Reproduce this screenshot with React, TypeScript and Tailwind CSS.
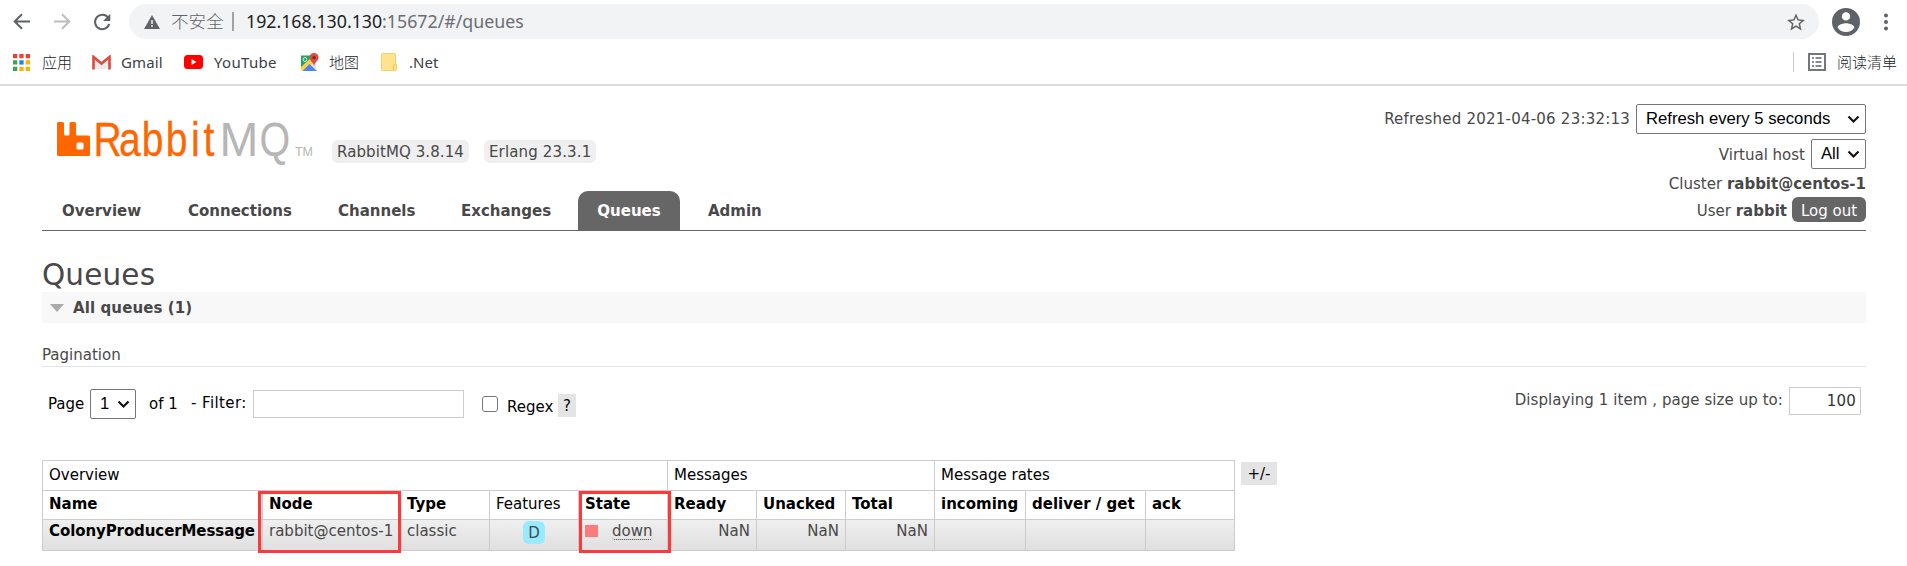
import type { ReactNode } from "react";

function Chevron() {
  return (
    <svg width="13" height="9" viewBox="0 0 13 9" className="shrink-0">
      <path d="M1.5 1.5 6.5 6.5 11.5 1.5" fill="none" stroke="#111" strokeWidth="2.2" />
    </svg>
  );
}

function SelectBox({ className, children }: { className: string; children: ReactNode }) {
  return (
    <button
      className={
        "flex h-[30px] items-center justify-between rounded-[2px] border border-[#767676] bg-white pr-[5px] pl-[9px] font-['Liberation_Sans',Arial,sans-serif] text-[16.67px] leading-5 whitespace-nowrap text-black " +
        className
      }
    >
      {children}
      <Chevron />
    </button>
  );
}

function BrowserBar() {
  return (
    <div className="h-[86px] border-b-2 border-[#dadce0] bg-white font-['Noto_Sans','Noto_Sans_CJK_SC',sans-serif]">
      <div className="flex h-[43px] items-center pl-[13px]">
        <svg width="17" height="17" viewBox="0 0 17 17" fill="none" stroke="#5f6368" strokeWidth="2">
          <path d="M17 8.5H2M9 1.2 1.7 8.5 9 15.8" />
        </svg>
        <svg className="ml-[24px]" width="17" height="17" viewBox="0 0 17 17" fill="none" stroke="#bbbdbf" strokeWidth="2">
          <path d="M0 8.5h15M8 1.2l7.3 7.3L8 15.8" />
        </svg>
        <svg className="ml-[22px]" width="18" height="18" viewBox="0 0 18 18">
          <path d="M15.3 5A7.2 7.2 0 1 0 16.2 11" fill="none" stroke="#5f6368" strokeWidth="2.1" />
          <path d="M17.3 0.8V8h-7.2z" fill="#5f6368" />
        </svg>
        <div className="ml-[18px] flex h-[35px] w-[1690px] items-center rounded-full bg-[#f1f3f4] pr-[14px] pl-[15px]">
          <svg width="16" height="14" viewBox="0 0 16 14">
            <path d="M8 0 16 14H0z" fill="#5f6368" />
            <path d="M7.2 5h1.6v4H7.2zM7.2 10.3h1.6v1.7H7.2z" fill="#f1f3f4" />
          </svg>
          <span className="mb-[2px] ml-[11px] w-[54px] text-[17.6px] leading-6 font-light whitespace-nowrap text-[#5f6368]">不安全</span>
          <span className="ml-[7px] h-[19px] w-[2px] bg-[#a0a3a6]" />
          <span className="mb-[2px] ml-[12px] text-[17.75px] leading-6 whitespace-nowrap text-[#6a6e73]">
            <span className="text-[#202124]">192.168.130.130</span>:15672/#/queues
          </span>
          <svg className="ml-auto" width="18" height="18" viewBox="0 0 24 24">
            <path
              fill="#5f6368"
              d="M24 9.2 15.4 8.4 12 .5 8.6 8.4 0 9.2l6.5 5.6L4.6 23.200 12 18.800l7.400 4.400-1.900-8.400zM12 16.300l-4.500 2.700 1.200-5.100-4-3.400 5.200-.5L12 5.300l2.100 4.700 5.200.5-4 3.400 1.200 5.100z"
            />
          </svg>
        </div>
        <svg className="ml-[13px]" width="28" height="28" viewBox="2 2 20 20">
          <path
            fill="#5f6368"
            d="M12 2a10 10 0 1 0 0 20 10 10 0 0 0 0-20zm0 3a3 3 0 1 1 0 6 3 3 0 0 1 0-6zm0 14.200a7.200 7.200 0 0 1-6-3.220c.03-1.990 4-3.080 6-3.080s5.970 1.090 6 3.080a7.200 7.200 0 0 1-6 3.220z"
          />
        </svg>
        <svg className="ml-[24px]" width="4" height="18" viewBox="0 0 4 18" fill="#5f6368">
          <circle cx="2" cy="2.500" r="2" />
          <circle cx="2" cy="9" r="2" />
          <circle cx="2" cy="15.500" r="2" />
        </svg>
      </div>
      <div className="flex h-[38px] items-center pl-[13px] text-[15px] leading-5 whitespace-nowrap text-[#3c4043]">
        <svg width="17" height="17" viewBox="0 0 17 17">
          <path fill="#ea4335" d="M0 0h4.300v4.300H0zM6.300 0h4.300v4.300H6.300zM12.700 0H17v4.300h-4.300z" />
          <path fill="#34a853" d="M0 6.300h4.300v4.300H0zM0 12.700h4.300V17H0z" />
          <path fill="#1a83f7" d="M6.300 6.300h4.300v4.300H6.300z" />
          <path fill="#fbb003" d="M12.700 6.300H17v4.300h-4.300zM6.300 12.700h4.300V17H6.300zM12.700 12.700H17V17h-4.300z" />
        </svg>
        <span className="ml-[12px] w-[50px] font-light text-[#202326]">应用</span>
        <svg width="19" height="15" viewBox="0 0 19 15">
          <path fill="#ececec" d="M1 1h17v13H1z" />
          <path fill="#fff" d="M3 1h13l-6.500 6z" />
          <path fill="none" stroke="#dd4b3e" strokeWidth="2.600" d="M1.500 14.500V2l8 6.500 8-6.500v12.500" />
        </svg>
        <span className="ml-[10px] w-[63px] tracking-[0.1px]">Gmail</span>
        <svg width="19" height="14" viewBox="0 0 19 14">
          <rect width="19" height="14" rx="3.500" fill="#f00" />
          <path d="M7.500 4v6l5-3z" fill="#fff" />
        </svg>
        <span className="ml-[11px] w-[86px] tracking-[0.3px]">YouTube</span>
        <svg width="19" height="19" viewBox="0 0 19 19">
          <path d="M1 2.500h14v14H1z" fill="#23a566" />
          <path d="M1 17.500V14L12 4l3 1.500v12z" fill="#fdd047" />
          <path d="M2.500 18 9.500 11l7.500 7z" fill="#4a86f0" />
          <path d="M11 12 14 9l2 2v6z" fill="#e4e4e4" />
          <circle cx="5" cy="6.500" r="1.900" fill="none" stroke="#d8f0e2" strokeWidth="1" />
          <path d="M14 0a4.600 4.600 0 0 0-4.600 4.600c0 3.200 4 4.200 4.600 9 .6-4.800 4.600-5.800 4.600-9A4.600 4.600 0 0 0 14 0z" fill="#df4c3f" />
          <circle cx="14" cy="4.600" r="1.600" fill="#7b2420" />
        </svg>
        <span className="ml-[10px] w-[52px] font-light text-[#202326]">地图</span>
        <svg width="16" height="18" viewBox="0 0 16 18">
          <path d="M1.500.5h11.500a1.500 1.500 0 0 1 1.500 1.500v9.500h1v5a1 1 0 0 1-1 1h-13a1 1 0 0 1-1-1v-15a1 1 0 0 1 1-1z" fill="#ffe48d" stroke="#f2cf63" />
          <path d="M12.500 17v-4.500l2-1" fill="none" stroke="#eac04c" />
        </svg>
        <span className="ml-[12px]">.Net</span>
        <div className="ml-auto flex items-center pr-[10px]">
          <span className="h-[20px] w-px bg-[#c8cacd]" />
          <svg className="ml-[14px]" width="18" height="18" viewBox="0 0 18 18">
            <rect x="1" y="1" width="16" height="16" fill="#fff" stroke="#73777b" strokeWidth="2" />
            <path d="M4 5h2M7.500 5h6M4 9h2M7.500 9h6M4 13h2M7.500 13h6" stroke="#5f6368" strokeWidth="1.500" />
          </svg>
          <span className="ml-[11px] text-[15px] font-light text-[#202326]">阅读清单</span>
        </div>
      </div>
    </div>
  );
}

function Logo() {
  return (
    <svg width="258" height="64" viewBox="0 0 258 64" className="shrink-0 font-['Liberation_Sans',Arial,sans-serif]">
      <path
        fill="#f60"
        transform="translate(0 11)"
        d="M1.500 5h4A1.500 1.500 0 0 1 7 6.500V17a1.500 1.500 0 0 0 1.500 1.500h2.500A1.500 1.500 0 0 0 12.500 17V6.500A1.500 1.500 0 0 1 14 5h3.500A1.500 1.500 0 0 1 19 6.500V17a1.500 1.500 0 0 0 1.500 1.500H31.500a1.500 1.500 0 0 1 1.500 1.500v17.500A1.500 1.500 0 0 1 31.500 39H1.500A1.500 1.500 0 0 1 0 37.500v-31A1.500 1.500 0 0 1 1.500 5z"
      />
      <rect x="19.500" y="36.500" width="7" height="7" rx="1.500" fill="#fff" />
      <text transform="scale(0.82 1)" x="44.500 75.600 103.400 132.700 163.500 178.600" y="50" fontSize="47.5" fill="#f60" stroke="#f60" strokeWidth="0.3">
        Rabbit
      </text>
      <text transform="scale(0.98 1)" x="165.800" y="50" fontSize="47.5" fill="#b6b6b6">
        M
      </text>
      <text transform="scale(0.83 1)" x="244" y="50" fontSize="47.5" fill="#b6b6b6">
        Q
      </text>
      <text x="238" y="50" fontSize="12.5" textLength="18" lengthAdjust="spacingAndGlyphs" fill="#b6b6b6">
        TM
      </text>
    </svg>
  );
}

const TABS = [
  { label: "Overview", cell: "w-[126px]" },
  { label: "Connections", cell: "w-[150px]" },
  { label: "Channels", cell: "w-[123px]" },
  { label: "Exchanges", cell: "w-[117px]" },
];

function Header() {
  return (
    <header className="flex h-[145px] justify-between border-b border-[#666]">
      <div className="flex flex-col">
        <div className="flex h-[105px] pt-[20px] pl-[15px]">
          <Logo />
          <span className="mt-[34px] ml-[17px] h-[23px] w-[137px] rounded-[6px] bg-[#efefef] pl-[5px] leading-[25px] tracking-[0.09px]">RabbitMQ 3.8.14</span>
          <span className="mt-[34px] ml-[15px] h-[23px] w-[112px] rounded-[6px] bg-[#efefef] pl-[5px] leading-[25px] tracking-[0.14px]">Erlang 23.3.1</span>
        </div>
        <nav className="flex h-[39px] pl-[20px] leading-[41px] font-bold">
          {TABS.map((tab) => (
            <span key={tab.label} className={tab.cell}>
              {tab.label}
            </span>
          ))}
          <span className="h-[40px] w-[102px] rounded-t-[10px] bg-[#666] text-center text-white">Queues</span>
          <span className="ml-[28px]">Admin</span>
        </nav>
      </div>
      <div className="flex flex-col items-end pt-[18px]">
        <div className="flex h-[30px] items-center gap-[6px]">
          <span className="tracking-[0.22px]">Refreshed 2021-04-06 23:32:13</span>
          <SelectBox className="w-[230px]">Refresh every 5 seconds</SelectBox>
        </div>
        <div className="mt-[5px] flex h-[30px] items-center gap-[6px]">
          <span className="pt-[2px]">Virtual host</span>
          <SelectBox className="w-[55px]">All</SelectBox>
        </div>
        <div className="mt-[5px]">
          Cluster <b>rabbit@centos-1</b>
        </div>
        <div className="mt-[3px] flex items-center gap-[5px]">
          <span className="pt-[2px]">
            User <b>rabbit</b>
          </span>
          <button className="h-[25px] w-[74px] rounded-[6px] bg-[#666] pt-[2px] leading-5 text-white">Log out</button>
        </div>
      </div>
    </header>
  );
}

function Pagination() {
  return (
    <div className="flex h-[93px] justify-between">
      <div className="flex pt-[22px] pl-[6px] text-black">
        <span className="mt-[5px] w-[42px]">Page</span>
        <SelectBox className="w-[46px]">1</SelectBox>
        <span className="mt-[5px] ml-[13px] w-[42px]">of 1</span>
        <span className="mt-[4px] w-[62px] tracking-[0.4px] whitespace-nowrap">- Filter:</span>
        <span className="mt-[1px] h-[28px] w-[211px] border border-[#ccc] bg-white" />
        <span className="mt-[7px] ml-[18px] h-[16px] w-[16px] rounded-[3px] border border-[#767676] bg-white" />
        <span className="mt-[8px] ml-[9px] w-[51px]">Regex</span>
        <span className="mt-[5px] h-[23px] w-[18px] bg-[#e4e4e4] text-center leading-[25px]">?</span>
      </div>
      <div className="flex pt-[20px] pr-[5px]">
        <span className="mt-[3px] tracking-[0.07px]">Displaying 1 item , page size up to:</span>
        <span className="ml-[6px] h-[28px] w-[72px] border border-[#ccc] bg-white pr-[4px] text-right leading-[26px] tracking-[0.2px] text-[#333]">100</span>
      </div>
    </div>
  );
}

const COLUMNS = [
  { label: "Name", bold: true },
  { label: "Node", bold: true },
  { label: "Type", bold: true },
  { label: "Features", bold: false },
  { label: "State", bold: true },
  { label: "Ready", bold: true },
  { label: "Unacked", bold: true },
  { label: "Total", bold: true },
  { label: "incoming", bold: true },
  { label: "deliver / get", bold: true },
  { label: "ack", bold: true },
];

const GRID = "grid grid-cols-[220px_138px_89px_89px_89px_89px_89px_89px_91px_120px_89px] ";
const CELL = "border-r border-b border-[#ccc] pl-[6px] whitespace-nowrap ";

function QueueTable() {
  return (
    <div className="flex">
      <div className="relative w-[1193px] border-t border-l border-[#ccc] text-black">
        <div className={GRID + "h-[29px] leading-[29px]"}>
          <div className={CELL + "col-span-5"}>Overview</div>
          <div className={CELL + "col-span-3"}>Messages</div>
          <div className={CELL + "col-span-3"}>Message rates</div>
        </div>
        <div className={GRID + "h-[29px] leading-[29px]"}>
          {COLUMNS.map((c) => (
            <div key={c.label} className={CELL + (c.bold ? "font-bold" : "")}>
              {c.label}
            </div>
          ))}
        </div>
        <div className={GRID + "h-[32px] bg-linear-to-b from-[#f0f0f0] to-[#dfdfdf] leading-[24px] text-[#484848]"}>
          <div className={CELL + "font-bold tracking-[-0.09px] text-black"}>ColonyProducerMessage</div>
          <div className={CELL}>rabbit@centos-1</div>
          <div className={CELL}>classic</div>
          <div className={CELL + "pt-[2px] pl-[33px]"}>
            <div className="h-[23px] w-[22px] rounded-[6px] bg-[#98ebff] text-center leading-6">D</div>
          </div>
          <div className={CELL + "flex"}>
            <span className="mt-[6px] h-[12px] w-[13px] bg-[#ff7a7a]" />
            <span className="ml-[14px] h-[21px] rounded-[3px] border-b border-dotted border-[#484848]">down</span>
          </div>
          <div className={CELL + "pr-[6px] text-right"}>NaN</div>
          <div className={CELL + "pr-[6px] text-right"}>NaN</div>
          <div className={CELL + "pr-[6px] text-right"}>NaN</div>
          <div className={CELL} />
          <div className={CELL} />
          <div className={CELL} />
        </div>
        <div className="absolute top-[30px] left-[215px] h-[62px] w-[143px] border-3 border-[#ff3838]" />
        <div className="absolute top-[30px] left-[536px] h-[62px] w-[92px] border-3 border-[#ff3838]" />
      </div>
      <span className="mt-[2px] ml-[6px] h-[23px] w-[36px] bg-[#e4e4e4] text-center leading-6 text-black">+/-</span>
    </div>
  );
}

export default function App() {
  return (
    <div className="h-[566px] w-[1907px] overflow-hidden bg-white">
      <BrowserBar />
      <main className="pr-[41px] pl-[42px] font-['DejaVu_Sans',Verdana,sans-serif] text-[15px] leading-5 text-[#484848]">
        <Header />
        <h1 className="h-[61px] pt-[26px] text-[29.5px] leading-[37px] tracking-[0.15px]">Queues</h1>
        <div className="flex h-[31px] items-center bg-[#f8f8f8] pl-[8px] font-bold">
          <svg width="14" height="8" viewBox="0 0 14 8">
            <path d="M0 0h14L7 8z" fill="#aaa" />
          </svg>
          <span className="ml-[9px] tracking-[0.1px]">All queues (1)</span>
        </div>
        <div className="h-[44px] border-b border-[#e4e4e4] pt-[22px]">Pagination</div>
        <Pagination />
        <QueueTable />
      </main>
    </div>
  );
}
